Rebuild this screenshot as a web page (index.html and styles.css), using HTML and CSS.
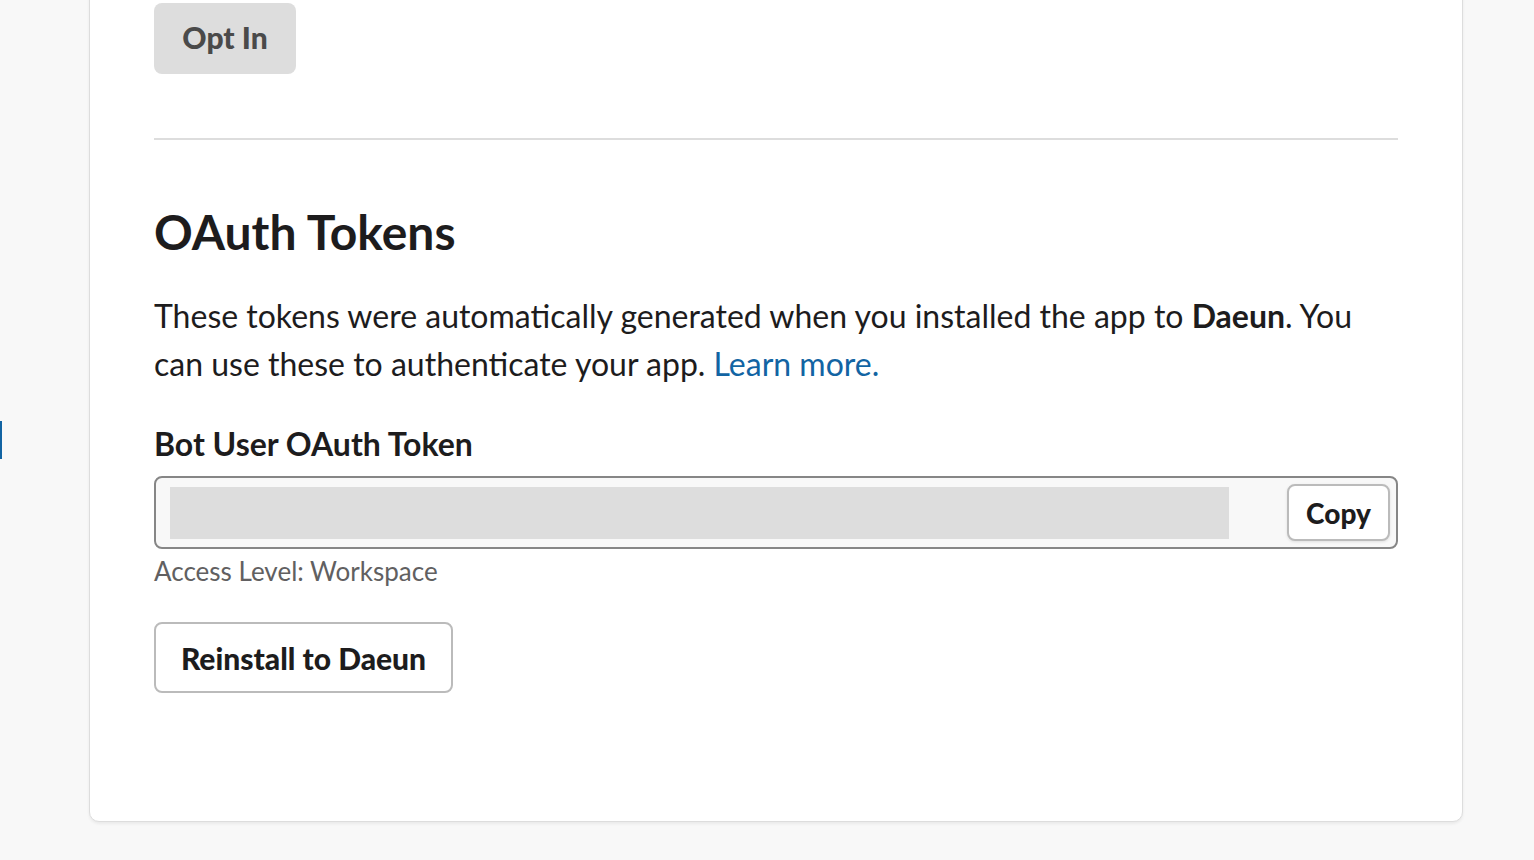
FILE: index.html
```html
<!DOCTYPE html>
<html lang="en">
<head>
  <meta charset="UTF-8" />
  <meta name="viewport" content="width=device-width, initial-scale=1.0"/>
  <title>OAuth &amp; Permissions</title>
  <link rel="stylesheet" href="styles.css">
</head>
<body>
  <div class="side-mark"></div>
  <div class="page">
    <div class="card">
      <button class="btn-optin">Opt In</button>

      <hr class="divider" />

      <h2>OAuth Tokens</h2>
      <p class="intro">These tokens were automatically generated when you installed the app to <b>Daeun</b>. You can use these to authenticate your app. <a href="#">Learn more.</a></p>

      <label class="field-label">Bot User OAuth Token</label>
      <div class="token-box">
        <div class="token-mask"></div>
        <button class="btn-copy">Copy</button>
      </div>
      <div class="hint">Access Level: Workspace</div>

      <button class="btn-outline">Reinstall to Daeun</button>
    </div>
  </div>
</body>
</html>
```

FILE: styles.css
```css
body {
  font-family: 'Lato', 'Liberation Sans', sans-serif;
  background: #f8f8f8;
  color: #1d1c1d;
  margin: 0;
  height: 860px;
  overflow: hidden;
}

.side-mark {
  position: absolute;
  left: 0;
  top: 421px;
  width: 2px;
  height: 38px;
  background: #1264a3;
}

.page {
  padding-left: 89px;
  width: 1374px;
}

.card {
  background: white;
  margin-top: -30px;
  padding: 32px 64px 128px 64px;
  border: 1px solid #dddddd;
  border-radius: 0 0 10px 10px;
  box-shadow: 0 2px 3px rgba(0,0,0,0.06);
  display: flex;
  flex-direction: column;
  align-items: flex-start;
}

button {
  font-family: inherit;
  font-weight: 900;
  cursor: pointer;
}

.btn-optin {
  background: #dddddd;
  color: #4a4a4a;
  border: none;
  border-radius: 8px;
  font-size: 30px;
  width: 142px;
  height: 71px;
  padding-bottom: 4px;
}

.divider {
  align-self: stretch;
  border: none;
  border-top: 2px solid #dddddd;
  margin: 64px 0 0 0;
}

h2 {
  font-size: 48px;
  font-weight: 700;
  margin: 60px 0 0 0;
  line-height: 64px;
}

.intro {
  font-size: 32px;
  line-height: 48px;
  margin: 28px 0 0 0;
  max-width: 1230px;
}

.intro b {
  font-weight: 700;
}

.intro a {
  color: #1264a3;
  text-decoration: none;
}

.field-label {
  font-size: 32px;
  font-weight: 700;
  margin-top: 36px;
  line-height: 40px;
}

.token-box {
  align-self: stretch;
  margin-top: 12px;
  height: 69px;
  border: 2px solid #868686;
  border-radius: 8px;
  background: #f8f8f8;
  display: flex;
  align-items: center;
  padding: 0 6px 0 14px;
  gap: 58px;
}

.token-mask {
  flex: 1;
  height: 52px;
  background: #dddddd;
}

.btn-copy {
  background: white;
  border: 2px solid #bbbbbb;
  border-radius: 8px;
  font-size: 28px;
  color: #1d1c1d;
  width: 103px;
  height: 57px;
  box-shadow: 0 1px 3px rgba(0,0,0,0.1);
}

.hint {
  font-size: 26px;
  color: #616061;
  margin-top: 5px;
  line-height: 34px;
}

.btn-outline {
  margin-top: 34px;
  background: white;
  border: 2px solid #bbbbbb;
  border-radius: 8px;
  font-size: 30px;
  color: #1d1c1d;
  width: 299px;
  height: 71px;
}
```
